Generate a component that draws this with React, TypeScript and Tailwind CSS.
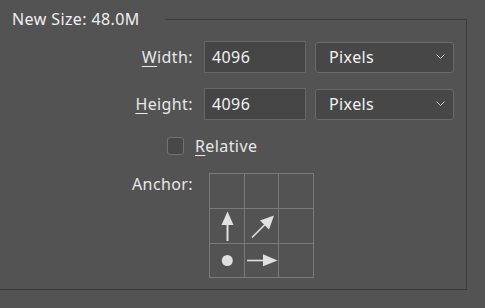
import React from "react";

function Chevron() {
  return (
    <svg width="9" height="6" viewBox="0 0 9 6" className="text-[#c8c8c8]">
      <path d="M0.5 0.5 L4.5 4.5 L8.5 0.5" fill="none" stroke="currentColor" strokeWidth="1" />
    </svg>
  );
}

function UnitSelect() {
  return (
    <div className="flex h-[31px] w-[139px] items-center justify-between rounded-[3px] border border-[#6a6a6a] bg-[#474747] pl-[13px] pr-[8px] text-[#f2f2f2]">
      <span>Pixels</span>
      <Chevron />
    </div>
  );
}

function NumberField({ value }: { value: string }) {
  return (
    <div className="flex h-[32px] w-[102px] items-center border border-[#676767] bg-[#454545] pl-[7px] text-[#f2f2f2]">
      {value}
    </div>
  );
}

function Cell({ children }: { children?: React.ReactNode }) {
  return <div className="border-b border-r border-[#7a7a7a]">{children}</div>;
}

export default function App() {
  return (
    <div
      className="h-[308px] w-[485px] overflow-hidden bg-[#535353] pt-[9px] text-[16px] tracking-[0.4px] text-[#e8e8e8]"
      style={{ fontFamily: '"Noto Sans", "Open Sans", sans-serif' }}
    >
      <fieldset className="w-[467px] border border-l-0 border-[#3b3b3b] pb-[11px]">
        <legend className="h-[20px] pl-[12px] pr-[25px] leading-[20px] text-[#f0f0f0]">
          New Size: 48.0M
        </legend>

        <div className="flex flex-col">
          {/* Width */}
          <div className="mt-[12px] flex items-center">
            <div className="w-[193px] text-right">
              <span className="underline underline-offset-[3px]">W</span>idth:
            </div>
            <div className="ml-[11px]">
              <NumberField value="4096" />
            </div>
            <div className="ml-[9px]">
              <UnitSelect />
            </div>
          </div>

          {/* Height */}
          <div className="mt-[15px] flex items-center">
            <div className="w-[193px] text-right">
              <span className="underline underline-offset-[3px]">H</span>eight:
            </div>
            <div className="ml-[11px]">
              <NumberField value="4096" />
            </div>
            <div className="ml-[9px]">
              <UnitSelect />
            </div>
          </div>

          {/* Relative */}
          <div className="mt-[17px] flex h-[18px] items-center pl-[167px]">
            <div className="h-[18px] w-[17px] rounded-[3px] border border-[#727272] bg-[#484848]" />
            <div className="ml-[11px]">
              <span className="underline underline-offset-[3px]">R</span>elative
            </div>
          </div>

          {/* Anchor */}
          <div className="mt-[18px] flex items-start">
            <div className="mt-[1px] w-[195px] pl-[132px] leading-[20px]">Anchor:</div>
            <div className="ml-[14px] grid grid-cols-[35px_34px_35px] grid-rows-[35px_35px_34px] border-l border-t border-[#7a7a7a] text-[#e0e0e0]">
              <Cell />
              <Cell />
              <Cell />
              <Cell>
                <svg width="34" height="34" viewBox="0 0 34 34">
                  <line x1="17.5" y1="15" x2="17.5" y2="32" stroke="currentColor" strokeWidth="2" />
                  <polygon points="17.5,2.5 11.5,16 23.5,16" fill="currentColor" />
                </svg>
              </Cell>
              <Cell>
                <svg width="33" height="34" viewBox="0 0 33 34">
                  <line x1="7" y1="28.5" x2="21" y2="14.5" stroke="currentColor" strokeWidth="1.6" />
                  <polygon points="29,6.5 15,11.5 24,20.5" fill="currentColor" />
                </svg>
              </Cell>
              <Cell />
              <Cell>
                <svg width="34" height="33" viewBox="0 0 34 33">
                  <circle cx="17.3" cy="16.5" r="5.5" fill="currentColor" />
                </svg>
              </Cell>
              <Cell>
                <svg width="33" height="33" viewBox="0 0 33 33">
                  <line x1="2" y1="16.5" x2="19" y2="16.5" stroke="currentColor" strokeWidth="1.6" />
                  <polygon points="32.5,16.5 18,10.3 18,22.3" fill="currentColor" />
                </svg>
              </Cell>
              <Cell />
            </div>
          </div>
        </div>
      </fieldset>
    </div>
  );
}
